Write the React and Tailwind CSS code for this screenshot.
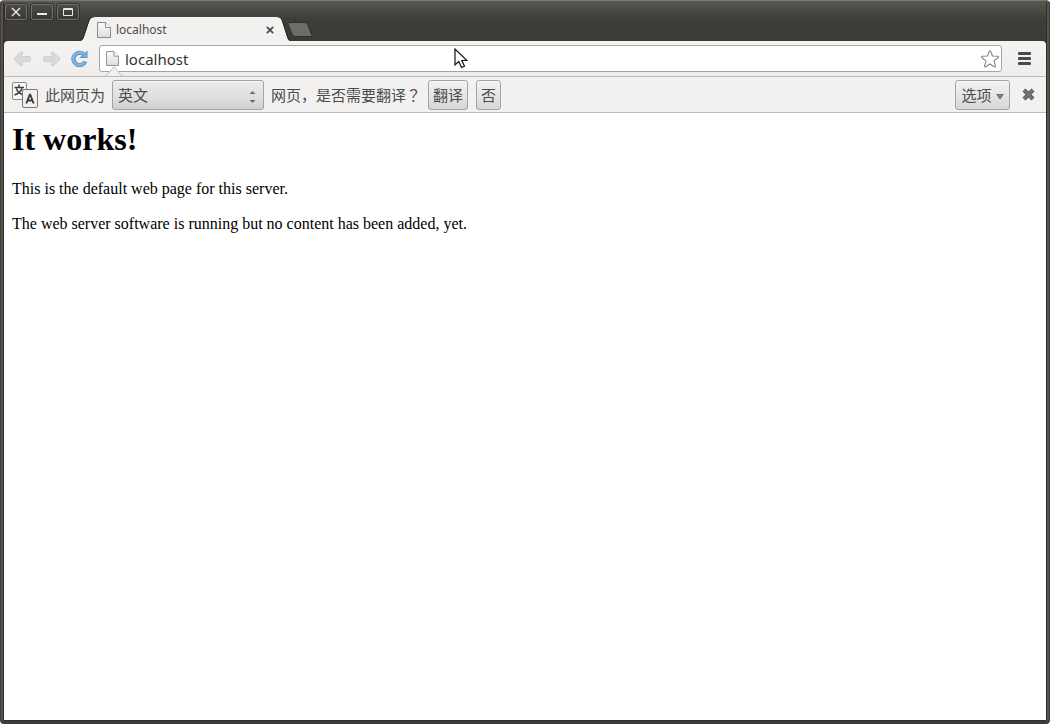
import React from "react";

const UI = "font-['Noto_Sans','Noto_Sans_CJK_SC',sans-serif]";
const INFOBAR_BUTTON =
  "flex h-[30px] items-center justify-center rounded-[3px] border border-[#a3a3a2] bg-linear-to-b from-[#f2f2f2] via-[#e6e6e6] to-[#d6d6d6] shadow-[inset_0_1px_0_#fafafa]";

function WindowButton({ label, children }) {
  return (
    <button
      type="button"
      aria-label={label}
      className="flex h-4 w-[22px] items-center justify-center rounded-[2px] border border-[#72716b] bg-linear-to-b from-[#4b4a45] to-[#393834] outline outline-[#33322e]"
    >
      <svg width="12" height="10" viewBox="0 0 12 10" fill="none" stroke="#e9e7e0">
        {children}
      </svg>
    </button>
  );
}

function PageIcon({ className }) {
  return (
    <svg className={className} width="14" height="16" viewBox="0 0 14 16">
      <path d="M.5.5h8l5 5v10H.5z" fill="url(#paper)" stroke="#8b8b8b" />
      <path d="M8.5.5v5h5" fill="#fff" stroke="#8b8b8b" />
      <defs>
        <linearGradient id="paper" x1="0" y1="0" x2="0" y2="1">
          <stop offset="0" stopColor="#fbfbfb" />
          <stop offset="1" stopColor="#dedede" />
        </linearGradient>
      </defs>
    </svg>
  );
}

function TitleBar() {
  return (
    <header className="flex h-10 items-start bg-linear-to-b from-[#5a5852] from-0% via-[#3e3d38] via-45% to-[#3c3b37] pl-px">
      <div className="flex gap-1 pt-[3px]">
        <WindowButton label="Close window">
          <path d="M2 1l8 8M10 1l-8 8" strokeWidth="1.500" />
        </WindowButton>
        <WindowButton label="Minimize">
          <path d="M1 7h10" strokeWidth="2" />
        </WindowButton>
        <WindowButton label="Maximize">
          <path d="M1.500 1.500h9v7h-9zM1.500 2.500h9" />
        </WindowButton>
      </div>
      <div className="flex h-full items-end">
        <svg width="16" height="24" viewBox="0 0 16 24">
          <path d="M0 24C3 24 4 22.500 5 20L10 5C11 2 12 0 16 0V24z" fill="#f2f1f0" />
          <path d="M0 23.500C3 23.500 3.500 22 4.500 19.500L9.500 4.500C10.500 1.500 12 0 15.500-.3" fill="none" stroke="#262522" />
        </svg>
        <div className="flex h-6 w-[182px] items-center bg-[#f2f1f0]">
          <PageIcon className="ml-0.5 mt-0.5" />
          <span className="ml-[5px] mt-px flex-1 text-[12px] leading-4 text-[#4c4c4c]">localhost</span>
          <button type="button" aria-label="Close tab" className="mt-0.5 mr-[3px]">
            <svg width="8" height="8" viewBox="0 0 8 8" stroke="#4a4a4a" strokeWidth="1.700">
              <path d="M.8.8l6.400 6.400M7.200.8L.8 7.200" />
            </svg>
          </button>
        </div>
        <svg width="14" height="24" viewBox="0 0 14 24">
          <path d="M0 0C3 0 4 1 5 4L10 20C11 23 12 24 14 24H0z" fill="#f2f1f0" />
          <path d="M0-.3C3.500-.3 4.500 1 5.500 4L10.500 19.500C11.300 22 12 23.500 14 23.500" fill="none" stroke="#262522" />
        </svg>
        <button type="button" aria-label="New tab" className="mb-1 -ml-1">
          <svg width="26" height="15" viewBox="0 0 26 15">
            <path
              d="M2.500.5H16.500c2.500 0 3.700 1 4.500 2.800L24.500 12.500c.4 1.200 0 2-1 2H9C6.800 14.500 5.800 13.500 5 12L1.300 2.500C.8 1.200 1.200.5 2.500.5z"
              fill="#6d6c67"
              stroke="#2f2e2b"
            />
          </svg>
        </button>
      </div>
    </header>
  );
}

function Arrow({ flip }) {
  return (
    <svg width="18" height="16" viewBox="0 0 18 16" className={flip ? "-scale-x-100" : ""}>
      <path
        d="M7.500 1.300L1.300 7.200q-.8.8 0 1.600l6.200 5.900c1.200 1 2.700-.2 2-1.700L8.300 10.500H16c1 0 1.500-.5 1.500-1.500V7c0-1-.5-1.500-1.500-1.500H8.300L9.500 3c.7-1.500-.8-2.700-2-1.700z"
        fill="#dcdad8"
        stroke="#cbc9c6"
        strokeWidth=".8"
        strokeLinejoin="round"
      />
    </svg>
  );
}

function Toolbar() {
  return (
    <div className="flex h-9 items-center rounded-t-[4px] border-b border-[#bebcba] bg-linear-to-b from-[#f4f3f2] to-[#efeeed] pl-[9px]">
      <button type="button" aria-label="Back"><Arrow /></button>
      <button type="button" aria-label="Forward" className="ml-3"><Arrow flip /></button>
      <button type="button" aria-label="Reload" className="ml-2.5">
        <svg width="17" height="17" viewBox="0 0 17 17">
          <path d="M14.300 11.500A6.200 6.200 0 1 1 12.400 4" fill="none" stroke="#5590c8" strokeWidth="4.200" />
          <path d="M16.500.5V8H8.300z" fill="#5590c8" />
          <path d="M13.700 11.800A6.200 6.200 0 1 1 12.600 4.300" fill="none" stroke="#82b4e2" strokeWidth="2.600" />
          <path d="M15.700 2.400v4.800h-5.200z" fill="#82b4e2" />
        </svg>
      </button>
      <div className="relative ml-[11px] flex h-[27px] flex-1 items-center rounded-[3px] border border-[#a5a4a2] bg-white">
        <PageIcon className="ml-[6px] h-[15px] w-[13px]" />
        <input
          aria-label="Address"
          defaultValue="localhost"
          className="ml-[6px] min-w-0 flex-1 bg-transparent text-[15px] leading-5 text-[#333] outline-none"
        />
        <button type="button" aria-label="Bookmark this page" className="mr-0.5">
          <svg width="18" height="18" viewBox="0 0 18 18" fill="#fff" stroke="#858585" strokeWidth="1.100" strokeLinejoin="round">
            <path d="M8.200 1.500q.8-1.400 1.600 0L11.500 6l5 .3q1.400.3.500 1.400l-4 3.200 1.400 5q.2 1.400-1.200.9L9 14l-4.200 2.800q-1.400.5-1.200-.9l1.400-5-4-3.200Q.100 6.600 1.500 6.300l5-.3z" />
          </svg>
        </button>
        <svg className="absolute -bottom-[5px] left-[5px]" width="18" height="11" viewBox="0 0 18 11">
          <path d="M0 11L2 9.500 9 1.500l7 8L18 11z" fill="#f2f1f0" />
          <path d="M0 10.500c1.500 0 2-.5 3-1.500L9 1.500 15 9c1 1 1.500 1.500 3 1.500" fill="none" stroke="#bebcba" />
        </svg>
      </div>
      <button type="button" aria-label="Menu" className="mr-[15px] ml-4">
        <svg width="13" height="13" viewBox="0 0 13 13" fill="#464a4a">
          <rect width="13" height="3" rx="1" />
          <rect y="5" width="13" height="3" rx="1" />
          <rect y="10" width="13" height="3" rx="1" />
        </svg>
      </button>
    </div>
  );
}

function TranslateIcon() {
  return (
    <svg width="28" height="28" viewBox="0 0 28 28">
      <rect x="1.500" y="1.500" width="14" height="17" rx="1.500" fill="#f8f8f8" stroke="#8a8a8a" />
      <path d="M8 3.500v2.300M3.500 6.500h9.500M5.300 7.500c1 3 3 5 7 6.500M11 7.500c-1 3-3.500 5-7.500 6.500" fill="none" stroke="#3e3e3e" strokeWidth="1.500" />
      <rect x="11.500" y="8.500" width="15" height="18" rx="1.500" fill="#f0f0f0" stroke="#777" />
      <path d="M15.300 22.500L19 13l3.700 9.500M16.800 19.500h4.500" fill="none" stroke="#3e3e3e" strokeWidth="1.900" strokeLinejoin="bevel" />
    </svg>
  );
}

function TranslateBar() {
  return (
    <div className="flex h-9 items-center border-b border-[#bebcba] bg-[#f2f1f0] pl-[7px] text-[15px] leading-5 text-[#4c4c4c]">
      <TranslateIcon />
      <label htmlFor="language" className="ml-1.5">此网页为</label>
      <div className="relative ml-[7px] w-[152px]">
        <select
          id="language"
          defaultValue="英文"
          className="h-[30px] w-full appearance-none rounded-[3px] border border-[#a3a3a2] bg-linear-to-b from-[#ececec] via-[#dedede] via-60% to-[#d0d0d0] pl-[5px] shadow-[inset_0_1px_0_#fafafa]"
        >
          <option>英文</option>
        </select>
        <svg className="pointer-events-none absolute top-[11px] right-2" width="7" height="12" viewBox="0 0 7 12" fill="#6e6e6e">
          <path d="M.5 3l3-3 3 3zM.5 9l3 3 3-3z" />
        </svg>
      </div>
      <span className="ml-[7px]">
        网页，是否需要翻译<span className="font-['Noto_Sans_CJK_TC',sans-serif]" lang="zh-TW">？</span>
      </span>
      <button type="button" className={INFOBAR_BUTTON + " ml-[7px] w-10"}>翻译</button>
      <button type="button" className={INFOBAR_BUTTON + " ml-2 w-[25px]"}>否</button>
      <button type="button" className={INFOBAR_BUTTON + " ml-auto h-[28px] w-[55px] gap-1"}>
        选项
        <svg width="8" height="6" viewBox="0 0 8 6" fill="#858585" stroke="#6c6c6c" className="mt-1">
          <path d="M.8.5h6.400L4 5z" />
        </svg>
      </button>
      <button type="button" aria-label="Dismiss" className="mr-[11px] ml-3">
        <svg width="13" height="13" viewBox="0 0 13 13" fill="none">
          <path d="M2 2l9 9M11 2l-9 9" stroke="#555" strokeWidth="4.200" />
          <path d="M2.200 2.200l8.600 8.600M10.800 2.200l-8.600 8.600" stroke="#777" strokeWidth="2" />
        </svg>
      </button>
    </div>
  );
}

export default function App() {
  return (
    <div className="bg-white">
      <div
        className={
          UI +
          " flex min-h-screen flex-col rounded-[4px] border-x border-t border-b-[3px] border-x-[#403f3a] border-t-[#77766f] border-b-[#3c3b37] bg-[#2f2e2a] px-[3px] pb-px shadow-[inset_2px_0_#56544d,inset_-2px_0_#56544d]"
        }
      >
        <TitleBar />
        <Toolbar />
        <TranslateBar />
        <main className="flex-1 bg-white px-2 pt-2 font-['Liberation_Serif',serif] text-[16px] leading-[19px] text-black">
          <h1 className="text-[32px] leading-[37px] font-bold">It works!</h1>
          <p className="mt-[21px]">This is the default web page for this server.</p>
          <p className="mt-4">The web server software is running but no content has been added, yet.</p>
        </main>
      </div>
      <svg className="pointer-events-none absolute top-12 left-[454px]" width="14" height="21" viewBox="0 0 14 21">
        <path d="M1 1v16l3.800-3.500 2.700 6 3-1.300-2.700-5.700H13z" fill="#fff" stroke="#111" strokeWidth="1.200" />
      </svg>
    </div>
  );
}
